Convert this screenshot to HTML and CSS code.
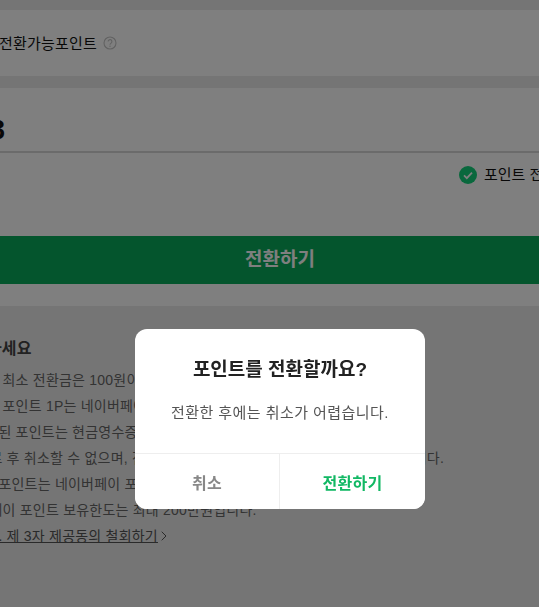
FILE: index.html
```html
<!DOCTYPE html>
<html lang="ko">
<head>
    <meta charset="UTF-8">
    <meta name="viewport" content="width=device-width, initial-scale=1.0">
    <title>포인트 전환</title>
    <link rel="stylesheet" href="styles.css">
</head>
<body>
    <div class="page">
        <section class="panel balance">
            <span class="balance-label">전환가능포인트</span>
            <svg class="help" width="14" height="14" viewBox="0 0 14 14" fill="none">
                <circle cx="7" cy="7" r="6" stroke="#c4c4c4" stroke-width="1.1"/>
                <path d="M5.1 5.6a1.9 1.9 0 1 1 3 1.5c-.7.5-1.1.8-1.1 1.6" stroke="#c4c4c4" stroke-width="1.1"/>
                <circle cx="7" cy="10.3" r=".7" fill="#c4c4c4"/>
            </svg>
        </section>

        <section class="panel convert">
            <div class="amount">3</div>
            <div class="agree">
                <svg class="check" width="18" height="18" viewBox="0 0 18 18">
                    <circle cx="9" cy="9" r="9" fill="#13d07a"/>
                    <path d="M5 9.4l2.8 2.7L13 6.6" fill="none" stroke="#fff" stroke-width="1.8"/>
                </svg>
                <span>포인트 전환에 동의합니다</span>
            </div>
            <button class="submit">전환하기</button>
        </section>

        <section class="notice">
            <h2>확인하세요</h2>
            <ul>
                <li>페이머니 최소 전환금은 100원이며 1원 단위로 전환할 수 있습니다.</li>
                <li>페이머니 포인트 1P는 네이버페이 포인트 1원으로 전환됩니다.</li>
                <li>머니전환된 포인트는 현금영수증 발급 대상에 포함되지 않습니다.</li>
                <li>전환 완료 후 취소할 수 없으며, 전환 전 내용을 꼭 다시 한번 확인해 주시기 바랍니다.</li>
                <li>전환머니포인트는 네이버페이 포인트로 바로 적립됩니다.</li>
                <li>&nbsp;네이버페이 포인트 보유한도는 최대 200만원입니다.</li>
                <li class="link-row">
                    <a href="#">전환안내. 제 3자 제공동의 철회하기</a>
                    <svg class="arrow" width="6" height="10" viewBox="0 0 6 10" fill="none">
                        <path d="M.7.7L5 5 .7 9.3" stroke="#555" stroke-width="1"/>
                    </svg>
                </li>
            </ul>
        </section>
    </div>

    <div class="dim"></div>

    <div class="modal">
        <div class="modal-body">
            <h3>포인트를 전환할까요?</h3>
            <p>전환한 후에는 취소가 어렵습니다.</p>
        </div>
        <div class="modal-actions">
            <button class="cancel">취소</button>
            <button class="confirm">전환하기</button>
        </div>
    </div>
</body>
</html>
```

FILE: styles.css
```css
html, body {
    margin: 0;
    height: 100%;
    overflow: hidden;
}

body {
    background: #ebebeb;
    font-family: "Liberation Sans", "Noto Sans CJK KR", sans-serif;
    color: #222;
}

.page {
    width: 660px;
    margin-left: -50px;
    padding-top: 10px;
}

.panel {
    background: #fff;
    margin-bottom: 12px;
}

.balance {
    height: 66px;
    display: flex;
    align-items: center;
    gap: 6px;
    padding-left: 49px;
    font-size: 15px;
}

.balance-label {
    margin-bottom: 2px;
    color: #111;
    letter-spacing: 0.2px;
}

.convert {
    height: 218px;
    margin-bottom: 0;
    box-sizing: border-box;
    padding-top: 22px;
}

.amount {
    height: 41px;
    line-height: 40px;
    padding-left: 40px;
    font-size: 27px;
    font-weight: bold;
    border-bottom: 2px solid #d6d6d6;
    color: #111;
}

.agree {
    display: flex;
    align-items: center;
    gap: 7px;
    height: 44px;
    padding-left: 509px;
    font-size: 15px;
    line-height: 20px;
    white-space: nowrap;
    overflow: hidden;
    color: #111;
}

.agree span {
    margin-bottom: 1px;
}

.check {
    flex: none;
}

.submit {
    display: block;
    width: 100%;
    height: 48px;
    margin-top: 39px;
    border: 0;
    background: #08ab5b;
    color: #fff;
    font: bold 19px "Liberation Sans", "Noto Sans CJK KR", sans-serif;
    padding: 0 0 6px 0;
}

.notice {
    padding-top: 31px;
    font-size: 14px;
    letter-spacing: 0.22px;
    color: #666;
}

.notice h2 {
    margin: 0 0 6px 7px;
    font-size: 16px;
    line-height: 24px;
    font-weight: bold;
    color: #444;
}

.notice ul {
    list-style: none;
    margin: 0 0 0 -4px;
    padding: 0;
}

.notice li {
    height: 26px;
    line-height: 26px;
    white-space: nowrap;
}

.link-row {
    display: flex;
    align-items: center;
    gap: 3px;
}

.notice a {
    color: #555;
}

.dim {
    position: fixed;
    inset: 0;
    background: rgba(0, 0, 0, 0.5);
}

.modal {
    position: fixed;
    left: 135px;
    top: 329px;
    width: 290px;
    height: 180px;
    background: #fff;
    border-radius: 12px;
    overflow: hidden;
    display: flex;
    flex-direction: column;
}

.modal-body {
    flex: 1;
    text-align: center;
    padding-top: 28px;
}

.modal-body h3 {
    margin: 0;
    font-size: 19px;
    line-height: 26px;
    font-weight: bold;
    color: #222;
}

.modal-body p {
    margin: 19px 0 0;
    font-size: 15px;
    line-height: 22px;
    letter-spacing: 0.45px;
    color: #555;
}

.modal-actions {
    display: flex;
    height: 55px;
    border-top: 1px solid #eee;
}

.modal-actions button {
    width: 50%;
    border: 0;
    background: #fff;
    font: bold 16px "Liberation Sans", "Noto Sans CJK KR", sans-serif;
    letter-spacing: 0.3px;
    padding: 0;
}

.modal-actions .cancel {
    color: #888;
    border-right: 1px solid #eee;
}

.modal-actions .confirm {
    color: #12b864;
}
```
